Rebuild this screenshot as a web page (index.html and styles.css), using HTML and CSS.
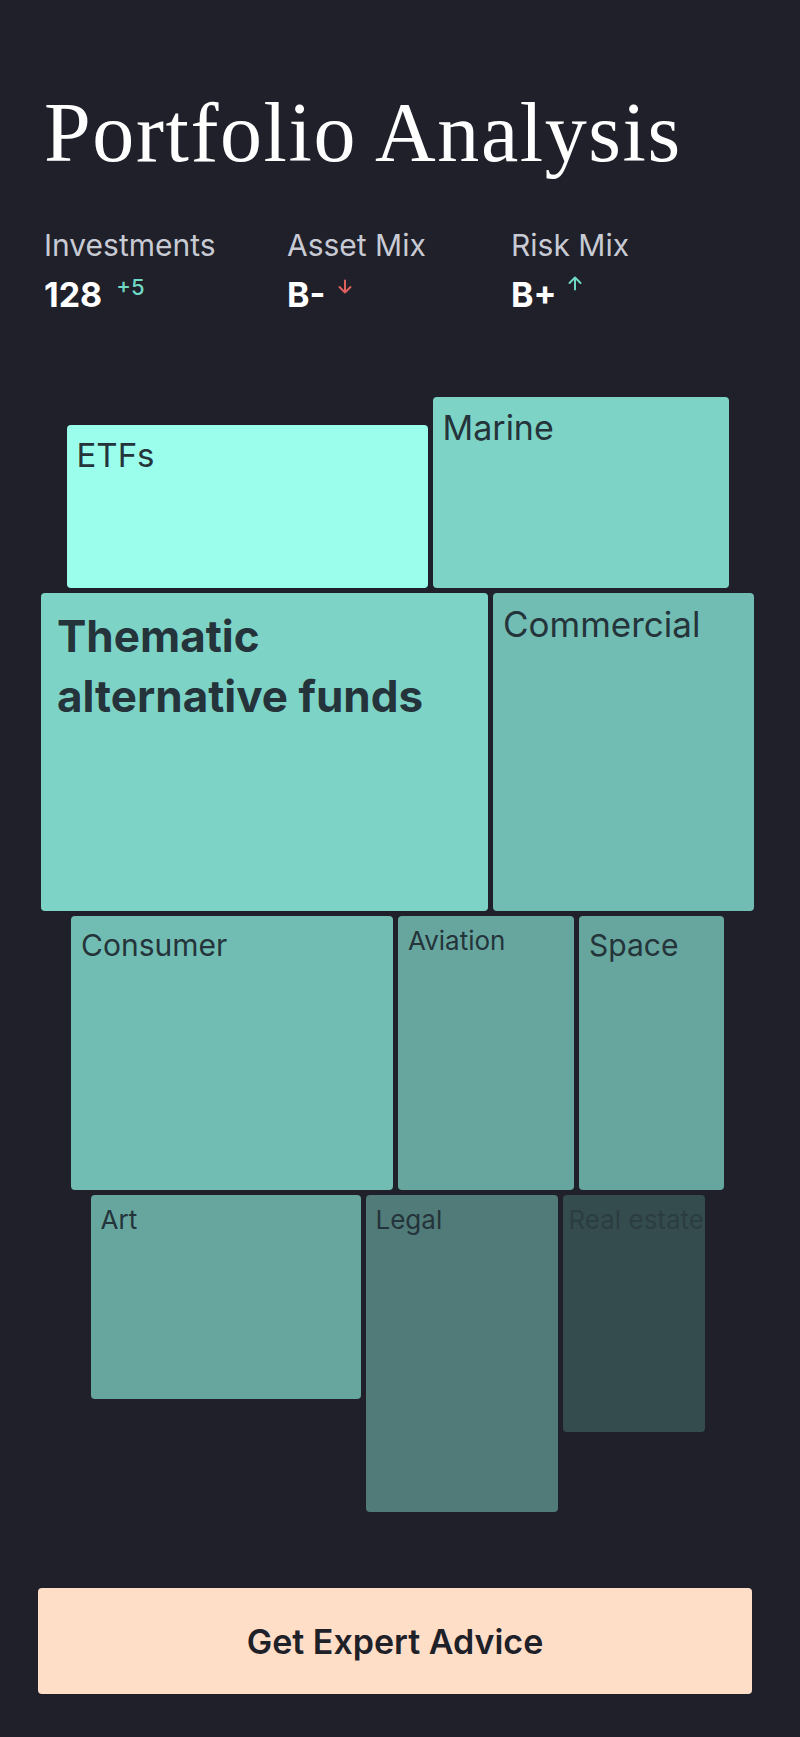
FILE: index.html
```html
<!DOCTYPE html>
<html>
<head>
    <title>Portfolio Analysis</title>
    <link rel="stylesheet" href="styles.css">
</head>
<body>
    <div class="header">
        <h1>Portfolio Analysis</h1>

        <div class="stats">
            <div class="stat">
                <div class="label">Investments</div>
                <div class="value">128 <span class="delta up">+5</span></div>
            </div>
            <div class="stat">
                <div class="label">Asset Mix</div>
                <div class="value">B-
                    <svg class="arrow" width="16" height="16" viewBox="0 0 16 16">
                        <path d="M8 1.5v12M2.5 8l5.5 5.5 5.5-5.5" fill="none" stroke="#e0605e" stroke-width="2" stroke-linecap="round" stroke-linejoin="round"/>
                    </svg>
                </div>
            </div>
            <div class="stat">
                <div class="label">Risk Mix</div>
                <div class="value">B+
                    <svg class="arrow arrow-up" width="16" height="16" viewBox="0 0 16 16">
                        <path d="M8 14.5v-12M2.5 8l5.5-5.5 5.5 5.5" fill="none" stroke="#6fd8c4" stroke-width="2" stroke-linecap="round" stroke-linejoin="round"/>
                    </svg>
                </div>
            </div>
        </div>
    </div>

    <div class="treemap">
        <div class="row row-bottom">
            <div class="tile c1 fs33" style="width:361px;height:163px">ETFs</div>
            <div class="tile c2 fs34" style="width:296px;height:191px">Marine</div>
        </div>
        <div class="row">
            <div class="tile c2 big" style="width:447px;height:318px">Thematic alternative funds</div>
            <div class="tile c3 fs35" style="width:261px;height:318px">Commercial</div>
        </div>
        <div class="row">
            <div class="tile c3 fs30" style="width:322px;height:274px">Consumer</div>
            <div class="tile c4 fs26" style="width:176px;height:274px">Aviation</div>
            <div class="tile c4 fs30" style="width:145px;height:274px">Space</div>
        </div>
        <div class="row row-top">
            <div class="tile c4 fs26" style="width:270px;height:204px">Art</div>
            <div class="tile c5 fs26" style="width:192px;height:317px">Legal</div>
            <div class="tile c6 fs26" style="width:142px;height:237px">Real estate</div>
        </div>
    </div>

    <button class="cta">Get Expert Advice</button>
</body>
</html>
```

FILE: styles.css
```css
body {
    margin: 0;
    background: #1f2029;
    font-family: Inter, "Noto Sans", sans-serif;
    color: #fff;
}
.header {
    padding: 0 44px;
}
h1 {
    margin: 91px 0 0;
    font-family: "Liberation Serif", serif;
    font-weight: normal;
    font-size: 84px;
    line-height: 84px;
    letter-spacing: 1.6px;
}
.stats {
    display: grid;
    grid-template-columns: 243px 224px 1fr;
    margin-top: 52px;
}
.label {
    font-size: 30px;
    line-height: 36px;
    color: #c8cad4;
}
.value {
    margin-top: 12px;
    font-size: 34px;
    line-height: 40px;
    font-weight: 700;
    display: flex;
    align-items: flex-start;
}
.delta {
    font-size: 22px;
    line-height: 24px;
    font-weight: 500;
    margin-left: 14px;
    margin-top: 0;
}
.up {
    color: #6fd8c4;
}
.arrow {
    margin-left: 12px;
    margin-top: 4px;
}
.arrow-up {
    margin-left: 10px;
    margin-top: 0;
}
.treemap {
    margin-top: 82px;
    padding-right: 5px;
    display: flex;
    flex-direction: column;
    gap: 5px;
}
.row {
    display: flex;
    justify-content: center;
    gap: 5px;
}
.row-bottom {
    align-items: flex-end;
}
.row-top {
    align-items: flex-start;
}
.tile {
    box-sizing: border-box;
    padding: 10px;
    border-radius: 4px;
    color: #24343a;
    overflow: hidden;
    white-space: nowrap;
}
.fs35 { font-size: 35px; }
.fs34 { font-size: 34px; }
.fs33 { font-size: 33px; }
.fs30 { font-size: 30px; padding-top: 11px; }
.fs26 { font-size: 26px; padding-top: 9px; }
.tile.big {
    font-size: 44px;
    font-weight: 700;
    line-height: 60px;
    padding: 13px 16px;
    white-space: normal;
}
.c1 { background: #9bfdec; }
.c2 { background: #7ed3c7; }
.c3 { background: #72bdb3; }
.c4 { background: #67a69e; }
.c5 { background: #507b79; }
.c6 { background: #344c4e; color: #2c3d41; padding-left: 6px; }
.cta {
    display: block;
    width: 714px;
    height: 106px;
    margin: 76px 0 0 38px;
    background: #ffdec8;
    color: #1f2128;
    border: none;
    border-radius: 4px;
    font-family: Inter, "Noto Sans", sans-serif;
    font-size: 34px;
    font-weight: 600;
    cursor: pointer;
}
```
